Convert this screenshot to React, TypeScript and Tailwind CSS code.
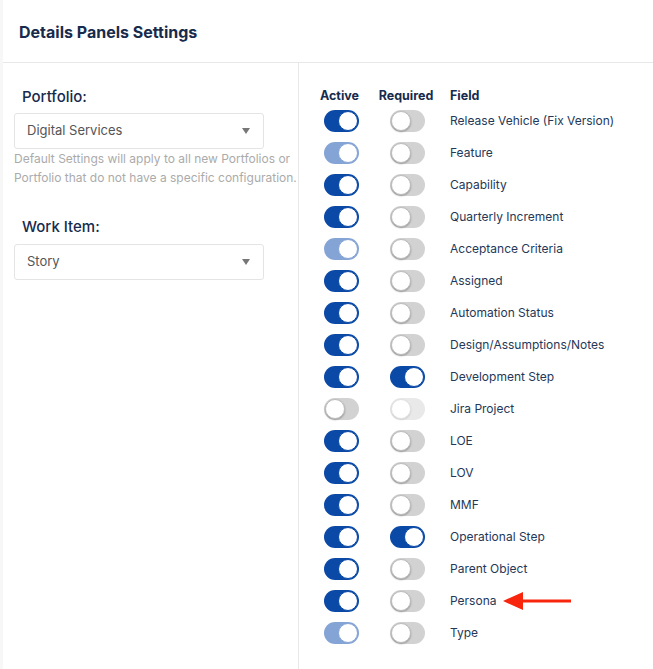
import React from 'react';

type Mode = 'on' | 'soft' | 'off' | 'disabled';

const rows: { label: string; active: Mode; required: Mode; mark?: boolean }[] = [
  { label: 'Release Vehicle (Fix Version)', active: 'on', required: 'off' },
  { label: 'Feature', active: 'soft', required: 'off' },
  { label: 'Capability', active: 'on', required: 'off' },
  { label: 'Quarterly Increment', active: 'on', required: 'off' },
  { label: 'Acceptance Criteria', active: 'soft', required: 'off' },
  { label: 'Assigned', active: 'on', required: 'off' },
  { label: 'Automation Status', active: 'on', required: 'off' },
  { label: 'Design/Assumptions/Notes', active: 'on', required: 'off' },
  { label: 'Development Step', active: 'on', required: 'on' },
  { label: 'Jira Project', active: 'off', required: 'disabled' },
  { label: 'LOE', active: 'on', required: 'off' },
  { label: 'LOV', active: 'on', required: 'off' },
  { label: 'MMF', active: 'on', required: 'off' },
  { label: 'Operational Step', active: 'on', required: 'on' },
  { label: 'Parent Object', active: 'on', required: 'off' },
  { label: 'Persona', active: 'on', required: 'off', mark: true },
  { label: 'Type', active: 'soft', required: 'off' },
];

const Toggle: React.FC<{ mode: Mode }> = ({ mode }) => {
  const track =
    mode === 'on'
      ? 'bg-[#0b49a6] justify-end'
      : mode === 'soft'
      ? 'bg-[#85a4d6] justify-end'
      : mode === 'off'
      ? 'bg-[#d2d2d2] justify-start'
      : 'bg-[#e9e9e9] justify-start';
  const knob =
    mode === 'on'
      ? 'border-[#0b49a6]'
      : mode === 'soft'
      ? 'border-[#85a4d6]'
      : mode === 'off'
      ? 'border-[#bdbdbd] shadow-[0_1px_2px_rgba(0,0,0,0.3)]'
      : 'border-[#e2e2e2] shadow-[0_1px_2px_rgba(0,0,0,0.12)]';
  return (
    <div className={`w-[35px] h-[22px] rounded-full flex items-center p-px ${track}`}>
      <div className={`w-5 h-5 rounded-full bg-white border ${knob}`} />
    </div>
  );
};

const Select: React.FC<{ value: string }> = ({ value }) => (
  <div className="w-[250px] h-9 border border-[#e4e4e4] rounded-[3px] bg-white flex items-center justify-between pl-[12px] pr-[13px]">
    <span className="text-[13px] text-[#555]">{value}</span>
    <svg width="8" height="6" viewBox="0 0 8 6">
      <path d="M0 0 L8 0 L4 6 Z" fill="#777" />
    </svg>
  </div>
);

export default function App() {
  return (
    <div
      className="w-[653px] h-[669px] bg-white flex flex-col border-l-[3px] border-[#f7f7f7] overflow-hidden"
      style={{ fontFamily: 'Inter, "Noto Sans", sans-serif' }}
    >
      <div className="h-[63px] shrink-0 border-b border-[#e8e8e8] flex items-center pl-4 pt-[2px]">
        <h1 className="text-[16px] font-bold text-[#172b4d]">Details Panels Settings</h1>
      </div>

      <div className="flex flex-1">
        {/* Left */}
        <div className="w-[296px] border-r border-[#e8e8e8] pl-[11px] pt-6">
          <div className="pl-[8px] h-5 leading-5 text-[15px] font-medium text-[#172b4d] mb-[6px]">Portfolio:</div>
          <Select value="Digital Services" />
          <p className="text-[12px] leading-[19px] text-[#ababab] whitespace-nowrap">
            Default Settings will apply to all new Portfolios or
            <br />
            Portfolio that do not have a specific configuration.
          </p>
          <div className="pl-[8px] h-5 leading-5 text-[15px] font-medium text-[#172b4d] mt-[30px] mb-[7px]">Work Item:</div>
          <Select value="Story" />
        </div>

        {/* Right */}
        <div className="flex-1 pl-[17px] pt-6">
          <div className="grid grid-cols-[50px_83px_1fr] h-[18px] items-center text-[12.5px] font-bold text-[#172b4d]">
            <span className="text-center pr-[3px]">Active</span>
            <span className="text-center pr-[3px]">Required</span>
            <span className="pl-px">Field</span>
          </div>
          {rows.map((r) => (
            <div key={r.label} className="grid grid-cols-[50px_83px_1fr] h-8 items-center">
              <div className="flex justify-center pl-[1px]">
                <Toggle mode={r.active} />
              </div>
              <div className="flex justify-center">
                <Toggle mode={r.required} />
              </div>
              <div className="flex items-center pl-px text-[12px] text-[#253858]">
                <span>{r.label}</span>
                {r.mark && (
                  <svg width="68" height="20" viewBox="0 0 68 20" className="ml-[7px]">
                    <path d="M0 10 L20 1 L20 8.5 L68 8.5 L68 11.5 L20 11.5 L20 19 Z" fill="#f8260c" />
                  </svg>
                )}
              </div>
            </div>
          ))}
        </div>
      </div>
    </div>
  );
}
